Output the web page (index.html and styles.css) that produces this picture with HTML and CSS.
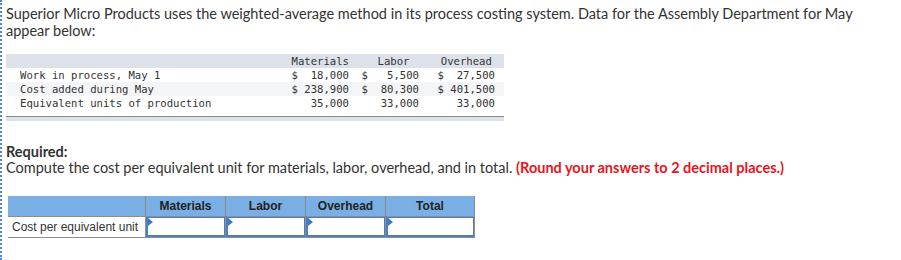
FILE: index.html
```html
<!DOCTYPE html>
<html>
<head>
<meta charset="utf-8">
<link rel="stylesheet" href="styles.css">
</head>
<body>
<div class="frame">
  <p class="intro">Superior Micro Products uses the weighted-average method in its process costing system. Data for the Assembly Department for May appear below:</p>

  <div class="data">
    <div class="drow dhead">
      <span></span>
      <span class="num">Materials</span>
      <span class="num hl">Labor</span>
      <span class="num ho">Overhead</span>
    </div>
    <div class="drow">
      <span>Work in process, May 1</span>
      <span class="num">$  18,000</span>
      <span class="num">$   5,500</span>
      <span class="num">$  27,500</span>
    </div>
    <div class="drow alt">
      <span>Cost added during May</span>
      <span class="num">$ 238,900</span>
      <span class="num">$  80,300</span>
      <span class="num">$ 401,500</span>
    </div>
    <div class="drow">
      <span>Equivalent units of production</span>
      <span class="num">35,000</span>
      <span class="num">33,000</span>
      <span class="num">33,000</span>
    </div>
    <div class="dfoot"></div>
  </div>

  <div class="req">
    <div class="req-title">Required:</div>
    <div>Compute the cost per equivalent unit for materials, labor, overhead, and in total. <span class="red">(Round your answers to 2 decimal places.)</span></div>
  </div>

  <table class="ans">
    <thead>
      <tr>
        <th class="lab"></th>
        <th>Materials</th>
        <th>Labor</th>
        <th>Overhead</th>
        <th class="tot">Total</th>
      </tr>
    </thead>
    <tbody>
      <tr>
        <td class="lab">Cost per equivalent unit</td>
        <td class="in"><div class="box"></div></td>
        <td class="in"><div class="box"></div></td>
        <td class="in"><div class="box"></div></td>
        <td class="in tot"><div class="box"></div></td>
      </tr>
    </tbody>
  </table>
</div>
</body>
</html>
```

FILE: styles.css
```css
html, body {
  margin: 0;
  padding: 0;
  background: #fff;
}

.frame {
  border-left: 2px dotted #4f86d6;
  height: 260px;
  box-sizing: border-box;
  padding: 5px 0 0 4px;
  font-family: Lato, "Open Sans", sans-serif;
  color: #333;
}

.intro {
  margin: 0;
  width: 880px;
  font-size: 14.5px;
  line-height: 17px;
}

.data {
  margin-top: 15px;
  width: 498px;
  font-family: "DejaVu Sans Mono", monospace;
  font-size: 10.6px;
  color: #333;
}

.drow {
  display: grid;
  grid-template-columns: 1fr 70px 70px 76px;
  padding: 0 9px 0 14px;
  height: 14px;
  line-height: 14px;
  white-space: pre;
}

.dhead {
  background: #dde2ea;
}

.alt {
  background: #f4f5f7;
}

.num {
  text-align: right;
}

.hl {
  padding-right: 1.5ch;
}

.ho {
  padding-right: 0.5ch;
}

.dfoot {
  margin-top: 6px;
  height: 4px;
  border-top: 1px solid #8a8a8a;
  background: #dde2ea;
}

.req {
  margin-top: 23px;
  font-size: 14.5px;
  line-height: 16px;
}

.req-title {
  font-weight: bold;
}

.red {
  color: #e8141c;
  font-weight: bold;
}

.ans {
  margin-top: 20px;
  margin-left: 2px;
  border-collapse: collapse;
  font-family: "Liberation Sans", Arial, sans-serif;
  font-size: 12px;
  color: #222;
}

.ans th {
  background: #7aafe6;
  height: 20px;
  padding: 0;
  width: 79px;
  font-weight: bold;
  text-align: center;
  border-left: 1px solid #8d8d8d;
  border-bottom: 1px solid #8d8d8d;
}

.ans th.lab {
  width: 137px;
  border-left: none;
}

.ans th.tot {
  width: 88px;
  border-right: 1px solid #8d8d8d;
}

.ans td {
  height: 20px;
  padding: 0;
  border-bottom: 1px solid #8d8d8d;
}

.ans td.lab {
  padding-left: 4px;
  text-align: left;
  color: #333;
  border-right: 1px solid #8d8d8d;
}

.ans td.in {
  border-right: 1px solid #8d8d8d;
}

.box {
  position: relative;
  height: 20px;
  box-sizing: border-box;
  border: 1px solid #4a7fc4;
  border-left-width: 2px;
  border-bottom-width: 2px;
  background: #fff;
}

.box::before {
  content: "";
  position: absolute;
  left: 0;
  top: 0;
  border-top: 4px solid transparent;
  border-bottom: 4px solid transparent;
  border-left: 5px solid #3a78c8;
}
```
